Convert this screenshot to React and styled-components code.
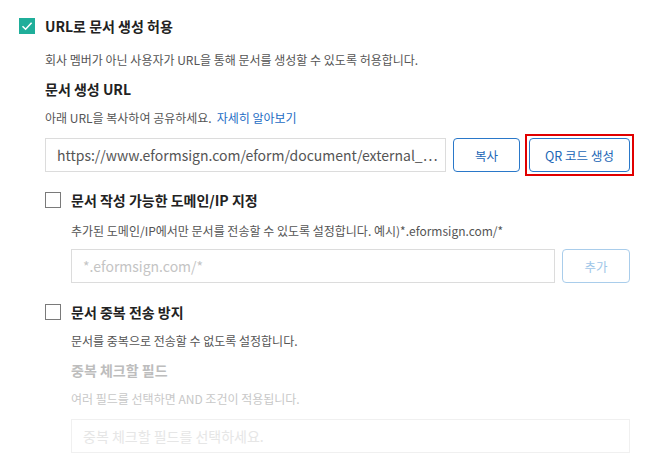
import React from "react";
import styled, { createGlobalStyle } from "styled-components";

const GlobalStyle = createGlobalStyle`
  body {
    margin: 0;
    background: #fff;
    font-family: "Noto Sans CJK KR", "Noto Sans", sans-serif;
  }
`;

const Page = styled.div`
  width: 645px;
  height: 469px;
  padding: 16px 0 0 19px;
  box-sizing: border-box;
  overflow: hidden;
`;

const OptionRow = styled.label`
  display: flex;
  align-items: center;
  gap: 10px;
  height: 20px;
  margin-top: ${(p) => p.$top || 0}px;
`;

const Box = styled.span`
  width: 16px;
  height: 16px;
  box-sizing: border-box;
  display: flex;
  align-items: center;
  justify-content: center;
  flex-shrink: 0;
  background: ${(p) => (p.$checked ? "#1fae9a" : "#fff")};
  border: ${(p) => (p.$checked ? "none" : "1.5px solid #7a7a7a")};
`;

const Title = styled.span`
  font-size: 14px;
  font-weight: 700;
  color: #222;
  line-height: 20px;
`;

const Body = styled.div`
  padding-left: 26px;
`;

const Desc = styled.p`
  margin: ${(p) => p.$top || 0}px 0 0;
  font-size: 12px;
  line-height: 20px;
  color: ${(p) => (p.$muted ? "#c8c8c8" : "#555")};
`;

const SubTitle = styled.h4`
  margin: ${(p) => p.$top || 0}px 0 0;
  font-size: 14px;
  font-weight: 700;
  line-height: 20px;
  color: ${(p) => (p.$muted ? "#bdbdbd" : "#222")};
`;

const Link = styled.a`
  color: #1b6cc4;
  text-decoration: none;
  margin-left: 5px;
`;

const FieldRow = styled.div`
  display: flex;
  gap: 7px;
  margin-top: ${(p) => p.$top || 0}px;
  width: ${(p) => p.$width}px;
`;

const Field = styled.div`
  flex: ${(p) => (p.$w ? "none" : "1")};
  width: ${(p) => (p.$w ? `${p.$w}px` : "auto")};
  height: 34px;
  box-sizing: border-box;
  border: 1px solid ${(p) => (p.$faint ? "#f0f0f0" : "#dcdcdc")};
  display: flex;
  align-items: center;
  padding: 0 11px;
  font-size: 14px;
  color: ${(p) => p.$color || "#555"};
  white-space: nowrap;
  overflow: hidden;
  min-width: 0;
`;

const Btn = styled.button`
  width: ${(p) => p.$w}px;
  height: 34px;
  flex-shrink: 0;
  box-sizing: border-box;
  background: #fff;
  border: 1px solid ${(p) => (p.$disabled ? "#a9cdeb" : "#2a78c9")};
  color: ${(p) => (p.$disabled ? "#9ec6e8" : "#2367b6")};
  border-radius: 4px;
  font-family: inherit;
  font-size: 12.5px;
  padding: 0;
`;

const Highlight = styled.div`
  padding: 2px;
  margin: -4px 0 -4px -2px;
  border: 2px solid #e10000;
  display: flex;
`;

const Check = () => (
  <svg width="12" height="10" viewBox="0 0 12 10">
    <path d="M1.5 5.2 L4.6 8.2 L10.6 1.8" fill="none" stroke="#fff" strokeWidth="1.6" />
  </svg>
);

export default function App() {
  return (
    <Page>
      <GlobalStyle />
      <OptionRow>
        <Box $checked>
          <Check />
        </Box>
        <Title>URL로 문서 생성 허용</Title>
      </OptionRow>
      <Body>
        <Desc $top={14}>회사 멤버가 아닌 사용자가 URL을 통해 문서를 생성할 수 있도록 허용합니다.</Desc>
        <SubTitle $top={9}>문서 생성 URL</SubTitle>
        <Desc $top={9}>
          아래 URL을 복사하여 공유하세요.
          <Link href="#">자세히 알아보기</Link>
        </Desc>
        <FieldRow $top={10} $width={600}>
          <Field $w={401}>https://www.eformsign.com/eform/document/external_⋯</Field>
          <Btn $w={67}>복사</Btn>
          <Highlight>
            <Btn $w={101}>QR 코드 생성</Btn>
          </Highlight>
        </FieldRow>

        <OptionRow $top={18}>
          <Box />
          <Title>문서 작성 가능한 도메인/IP 지정</Title>
        </OptionRow>
        <Body>
          <Desc $top={11}>
            추가된 도메인/IP에서만 문서를 전송할 수 있도록 설정합니다. 예시)*.eformsign.com/*
          </Desc>
          <FieldRow $top={8} $width={559}>
            <Field $color="#c4c4c4">*.eformsign.com/*</Field>
            <Btn $w={68} $disabled>추가</Btn>
          </FieldRow>
        </Body>

        <OptionRow $top={19}>
          <Box />
          <Title>문서 중복 전송 방지</Title>
        </OptionRow>
        <Body>
          <Desc $top={9}>문서를 중복으로 전송할 수 없도록 설정합니다.</Desc>
          <SubTitle $top={9} $muted>중복 체크할 필드</SubTitle>
          <Desc $top={9} $muted>여러 필드를 선택하면 AND 조건이 적용됩니다.</Desc>
          <FieldRow $top={10} $width={559}>
            <Field $faint $color="#e6e6e6">중복 체크할 필드를 선택하세요.</Field>
          </FieldRow>
        </Body>
      </Body>
    </Page>
  );
}
